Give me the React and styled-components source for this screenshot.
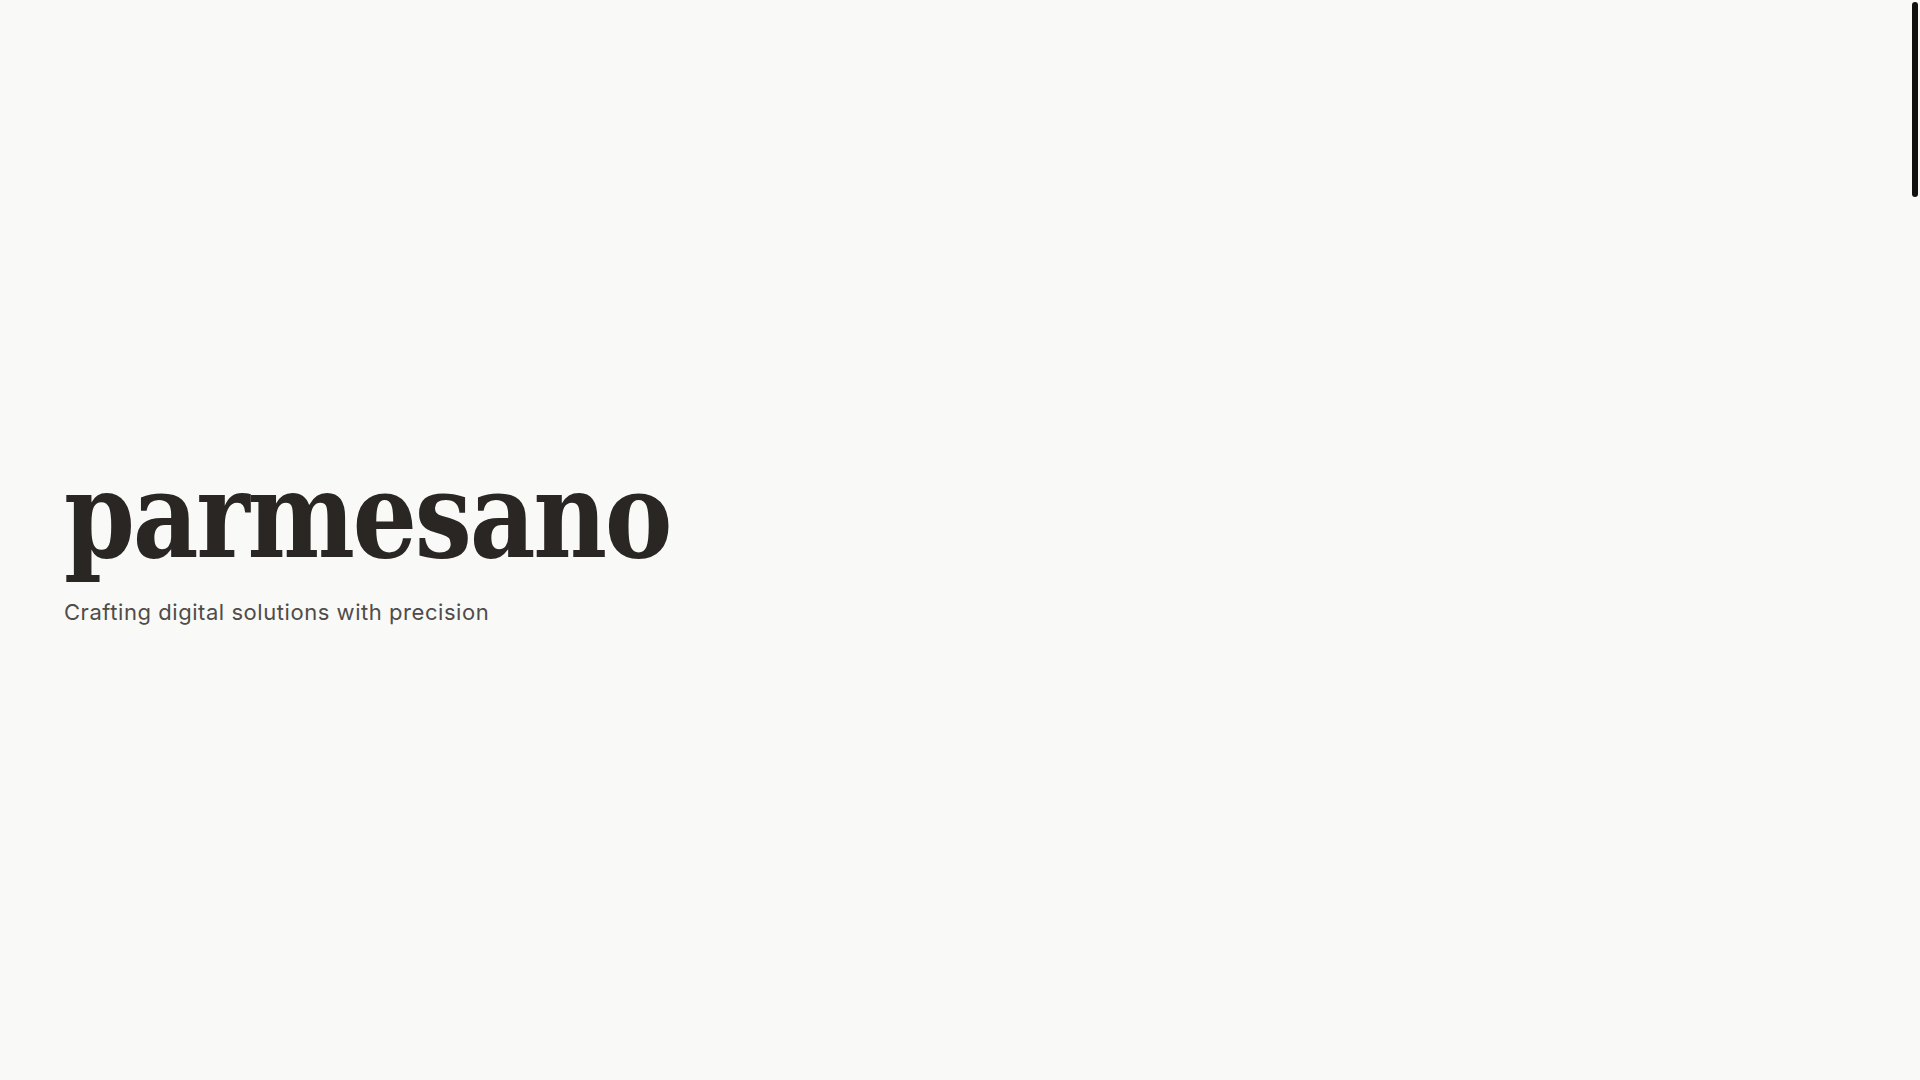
import React from 'react';
import styled, { createGlobalStyle } from 'styled-components';

const GlobalStyle = createGlobalStyle`
  html, body {
    margin: 0;
    padding: 0;
    background: #f9f9f7;
  }
  * { box-sizing: border-box; }
  html { scrollbar-width: none; }
  ::-webkit-scrollbar { display: none; }
`;

const Page = styled.main`
  min-height: 100vh;
  background: #f9f9f7;
`;

const Hero = styled.section`
  height: 100vh;
  display: flex;
  flex-direction: column;
  justify-content: center;
  align-items: flex-start;
  padding: 0 64px;
`;

const Title = styled.h1`
  margin: 0;
  font-family: "DejaVu Serif", serif;
  font-stretch: condensed;
  font-weight: 700;
  font-size: 120px;
  line-height: 1;
  letter-spacing: -0.02em;
  color: #2a2624;
  transform: scaleX(0.94);
  transform-origin: left center;
`;

const Tagline = styled.p`
  margin: 24px 0 0;
  font-family: Inter, "Noto Sans", sans-serif;
  font-size: 22px;
  letter-spacing: 0.025em;
  color: #4f4c49;
`;

const Spacer = styled.section`
  height: ${p => p.$h}px;
`;

// custom scroll indicator fixed to the right edge
const ScrollThumb = styled.div`
  position: fixed;
  top: 2px;
  right: 2px;
  width: 6px;
  height: 195px;
  border-radius: 3px;
  background: #111;
`;

export default function App() {
  return (
    <Page>
      <GlobalStyle />
      <Hero>
        <Title>parmesano</Title>
        <Tagline>Crafting digital solutions with precision</Tagline>
      </Hero>
      <Spacer $h={4900} />
      <ScrollThumb />
    </Page>
  );
}
